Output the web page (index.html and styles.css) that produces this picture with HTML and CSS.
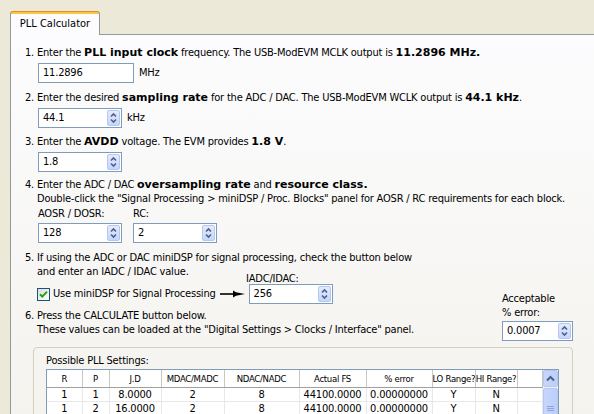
FILE: index.html
```html
<!DOCTYPE html>
<html>
<head>
<meta charset="utf-8">
<title>PLL Calculator</title>
<link rel="stylesheet" href="styles.css">
</head>
<body>
<div class="tabstrip">
  <div class="tab">PLL Calculator</div>
</div>
<div class="page">
  <div class="content">
    <p class="line">1. Enter the <b>PLL input clock</b> frequency. The USB-ModEVM MCLK output is <b>11.2896 MHz.</b></p>
    <div class="field-row gap-a">
      <div class="box w-clock"><span class="val">11.2896</span></div>
      <span class="unit">MHz</span>
    </div>

    <p class="line step2">2. Enter the desired <b>sampling rate</b> for the ADC / DAC. The USB-ModEVM WCLK output is <b>44.1 kHz</b>.</p>
    <div class="field-row gap-a">
      <div class="box w-spin"><span class="val">44.1</span><span class="spin"><svg width="11" height="14" viewBox="0 0 11 14"><path d="M3 5.5 L5.5 3 L8 5.5 M3 8.5 L5.5 11 L8 8.5" fill="none" stroke="#4D6185" stroke-width="1.6"/></svg></span></div>
      <span class="unit">kHz</span>
    </div>

    <p class="line step3">3. Enter the <b>AVDD</b> voltage. The EVM provides <b>1.8 V</b>.</p>
    <div class="field-row gap-a">
      <div class="box w-spin"><span class="val">1.8</span><span class="spin"><svg width="11" height="14" viewBox="0 0 11 14"><path d="M3 5.5 L5.5 3 L8 5.5 M3 8.5 L5.5 11 L8 8.5" fill="none" stroke="#4D6185" stroke-width="1.6"/></svg></span></div>
    </div>

    <p class="line step4">4. Enter the ADC / DAC <b>oversampling rate</b> and <b>resource class.</b></p>
    <p class="line indent">Double-click the "Signal Processing &gt; miniDSP / Proc. Blocks" panel for AOSR / RC requirements for each block.</p>
    <div class="pair">
      <div class="pair-item">
        <span class="label">AOSR / DOSR:</span>
        <div class="box w-spin"><span class="val">128</span><span class="spin"><svg width="11" height="14" viewBox="0 0 11 14"><path d="M3 5.5 L5.5 3 L8 5.5 M3 8.5 L5.5 11 L8 8.5" fill="none" stroke="#4D6185" stroke-width="1.6"/></svg></span></div>
      </div>
      <div class="pair-item">
        <span class="label">RC:</span>
        <div class="box w-spin"><span class="val">2</span><span class="spin"><svg width="11" height="14" viewBox="0 0 11 14"><path d="M3 5.5 L5.5 3 L8 5.5 M3 8.5 L5.5 11 L8 8.5" fill="none" stroke="#4D6185" stroke-width="1.6"/></svg></span></div>
      </div>
    </div>

    <p class="line step5">5. If using the ADC or DAC miniDSP for signal processing, check the button below</p>
    <div class="line-row">
      <p class="line indent cont">and enter an IADC / IDAC value.</p>
      <span class="label iadc">IADC/IDAC:</span>
    </div>

    <div class="split">
      <div class="split-left">
        <div class="check-row">
          <span class="checkbox"><svg width="11" height="11" viewBox="0 0 11 11"><path d="M2 5.2 L4.3 7.6 L9 2.6" fill="none" stroke="#21A121" stroke-width="2"/></svg></span>
          <span class="check-label">Use miniDSP for Signal Processing</span>
          <svg class="arrow" width="26" height="10" viewBox="0 0 26 10"><path d="M0 5 H15" stroke="#000" stroke-width="1.6"/><path d="M13 1.5 L16 3.2 L25 5 L16 6.8 L13 8.5 Z" fill="#000"/></svg>
          <div class="box w-spin"><span class="val">256</span><span class="spin"><svg width="11" height="14" viewBox="0 0 11 14"><path d="M3 5.5 L5.5 3 L8 5.5 M3 8.5 L5.5 11 L8 8.5" fill="none" stroke="#4D6185" stroke-width="1.6"/></svg></span></div>
        </div>
        <p class="line step6">6. Press the CALCULATE button below.</p>
        <p class="line indent">These values can be loaded at the "Digital Settings &gt; Clocks / Interface" panel.</p>
      </div>
      <div class="split-right">
        <span class="label">Acceptable</span>
        <span class="label">% error:</span>
        <div class="box w-err"><span class="val">0.0007</span><span class="spin"><svg width="11" height="14" viewBox="0 0 11 14"><path d="M3 5.5 L5.5 3 L8 5.5 M3 8.5 L5.5 11 L8 8.5" fill="none" stroke="#4D6185" stroke-width="1.6"/></svg></span></div>
      </div>
    </div>

    <div class="group">
      <span class="label">Possible PLL Settings:</span>
      <div class="grid-wrap">
        <table class="grid">
          <colgroup>
            <col class="c-r"><col class="c-p"><col class="c-jd"><col class="c-m"><col class="c-n"><col class="c-fs"><col class="c-err"><col class="c-lo"><col class="c-hi"><col class="c-x">
          </colgroup>
          <thead>
            <tr><th>R</th><th>P</th><th>J.D</th><th>MDAC/MADC</th><th>NDAC/NADC</th><th>Actual FS</th><th>% error</th><th>LO Range?</th><th>HI Range?</th><th></th></tr>
          </thead>
          <tbody>
            <tr><td>1</td><td>1</td><td>8.0000</td><td>2</td><td>8</td><td>44100.0000</td><td>0.00000000</td><td>Y</td><td>N</td><td></td></tr>
            <tr><td>1</td><td>2</td><td>16.0000</td><td>2</td><td>8</td><td>44100.0000</td><td>0.00000000</td><td>Y</td><td>N</td><td></td></tr>
          </tbody>
        </table>
        <div class="vscroll">
          <span class="sb-btn"><svg width="9" height="7" viewBox="0 0 9 7"><path d="M1 5.5 L4.5 2 L8 5.5" fill="none" stroke="#4D6185" stroke-width="2"/></svg></span>
          <span class="sb-thumb"><svg width="7" height="7" viewBox="0 0 7 7"><path d="M0 1.5 H7 M0 3.5 H7 M0 5.5 H7" stroke="#8CA4E0" stroke-width="1"/></svg></span>
        </div>
      </div>
    </div>
  </div>
</div>
</body>
</html>
```

FILE: styles.css
```css
html, body {
  margin: 0;
  padding: 0;
}
body {
  width: 594px;
  height: 414px;
  overflow: hidden;
  background: #ECE9D8;
  color: #000;
  font-family: "DejaVu Sans Condensed", "DejaVu Sans", sans-serif;
  font-stretch: condensed;
  font-size: 11px;
  line-height: 14px;
  letter-spacing: -0.2px;
}
p { margin: 0; }
b {
  font-weight: bold;
  font-family: "DejaVu Sans", sans-serif;
  font-stretch: normal;
  letter-spacing: 0;
}

.tabstrip {
  height: 34px;
  padding-left: 10px;
  display: flex;
  align-items: flex-end;
}
.tab {
  position: relative;
  z-index: 2;
  width: 88px;
  height: 22px;
  margin-bottom: -1px;
  border: 1px solid #919B9C;
  border-top: 1px solid #E68B2C;
  border-bottom: none;
  border-radius: 3px 3px 0 0;
  background: linear-gradient(#FFC83C 0 2px, #FCFCFE 2px);
  text-align: center;
  line-height: 21px;
  padding-top: 1px;
  box-sizing: content-box;
  letter-spacing: 0;
}

.page {
  margin-left: 10px;
  width: 600px;
  height: 380px;
  border-left: 1px solid #919B9C;
  border-top: 1px solid #919B9C;
  background: linear-gradient(#FCFCFE, #F4F3EE);
  box-sizing: border-box;
  padding: 11px 0 0 14px;
}
.content {
  width: 548px;
}

.line { white-space: nowrap; }
.step2 { margin-top: 8px; }
.step3 { margin-top: 7px; }
.step4 { margin-top: 6px; }
.step5 { margin-top: 8px; }
.step6 { margin-top: 5px; }
.indent { padding-left: 12px; }

.field-row {
  display: flex;
  align-items: center;
  margin-left: 13px;
}
.gap-a { margin-top: 3px; }
.unit { margin-left: 5px; }

.box {
  position: relative;
  height: 20px;
  box-sizing: border-box;
  border: 1px solid #7F9DB9;
  background: #fff;
  display: flex;
  align-items: center;
  padding-left: 4px;
}
.w-clock { width: 96px; }
.w-spin { width: 84px; }
.w-err { width: 71px; }
.val { flex: 1; }
.spin {
  width: 13px;
  height: 16px;
  margin-right: 1px;
  box-sizing: border-box;
  border: 1px solid #B4C7F3;
  border-radius: 2px;
  background: linear-gradient(#E3EBFD, #C5D5FC);
  display: flex;
  align-items: center;
  justify-content: center;
}

.pair {
  display: flex;
  gap: 11px;
  margin-left: 13px;
  margin-top: 1px;
}
.pair-item {
  display: flex;
  flex-direction: column;
}
.pair-item .box { margin-top: 2px; }
.label { display: block; white-space: nowrap; }

.line-row {
  display: flex;
  align-items: flex-start;
  height: 19px;
}
.cont { width: 209px; }
.iadc { padding-top: 7px; }

.split {
  display: flex;
  align-items: flex-start;
}
.split-left { flex: 1; }
.split-right {
  width: 71px;
  margin-top: 8px;
  display: flex;
  flex-direction: column;
}
.split-right .box { margin-top: 1px; }

.check-row {
  display: flex;
  align-items: center;
  height: 20px;
  padding-left: 12px;
}
.checkbox {
  width: 13px;
  height: 13px;
  box-sizing: border-box;
  border: 1px solid #1C5180;
  background: linear-gradient(135deg, #DCDCD7, #FFFFFF);
  display: flex;
  align-items: center;
  justify-content: center;
}
.check-label { margin-left: 3px; }
.arrow { margin-left: 4px; margin-right: 3px; }

.group {
  margin-top: 6px;
  margin-left: 8px;
  width: 540px;
  height: 120px;
  box-sizing: border-box;
  border: 1px solid #D0D0BF;
  border-radius: 4px;
  padding: 6px 0 0 12px;
}
.grid-wrap {
  margin-top: 1px;
  width: 513px;
  height: 100px;
  box-sizing: border-box;
  border: 1px solid #7F9DB9;
  background: #fff;
  display: flex;
  align-items: flex-start;
}
.grid {
  align-self: flex-start;
  border-collapse: collapse;
  table-layout: fixed;
  width: 495px;
  font-size: 11px;
  line-height: 13px;
}
.c-r { width: 35px; }
.c-p { width: 27px; }
.c-jd { width: 52px; }
.c-m { width: 63px; }
.c-n { width: 75px; }
.c-fs { width: 67px; }
.c-err { width: 66px; }
.c-lo { width: 43px; }
.c-hi { width: 42px; }
.c-x { width: 25px; }
.grid th {
  font-weight: normal;
  font-size: 9.5px;
  letter-spacing: -0.3px;
  height: 17px;
  line-height: 16px;
  padding: 0;
  text-align: center;
  white-space: nowrap;
  overflow: hidden;
  border-right: 1px solid #C8C8C0;
  border-bottom: 1px solid #A0A0A0;
  background: #fff;
}
.grid tbody tr { height: 14px; }
.grid td {
  height: 13px;
  line-height: 13px;
  padding: 0;
  text-align: center;
  white-space: nowrap;
  border-right: 1px solid #E8E8E8;
  border-bottom: 1px solid #E8E8E8;
}
.vscroll {
  width: 16px;
  align-self: stretch;
  display: flex;
  flex-direction: column;
  background: #F3F1EC;
}
.sb-btn, .sb-thumb {
  box-sizing: border-box;
  border: 1px solid #B4C8F6;
  border-radius: 2px;
  background: linear-gradient(90deg, #C8D6FB, #BCCEFA);
  display: flex;
  align-items: center;
  justify-content: center;
}
.sb-btn { height: 17px; }
.sb-thumb { height: 40px; margin-top: 1px; }
```
